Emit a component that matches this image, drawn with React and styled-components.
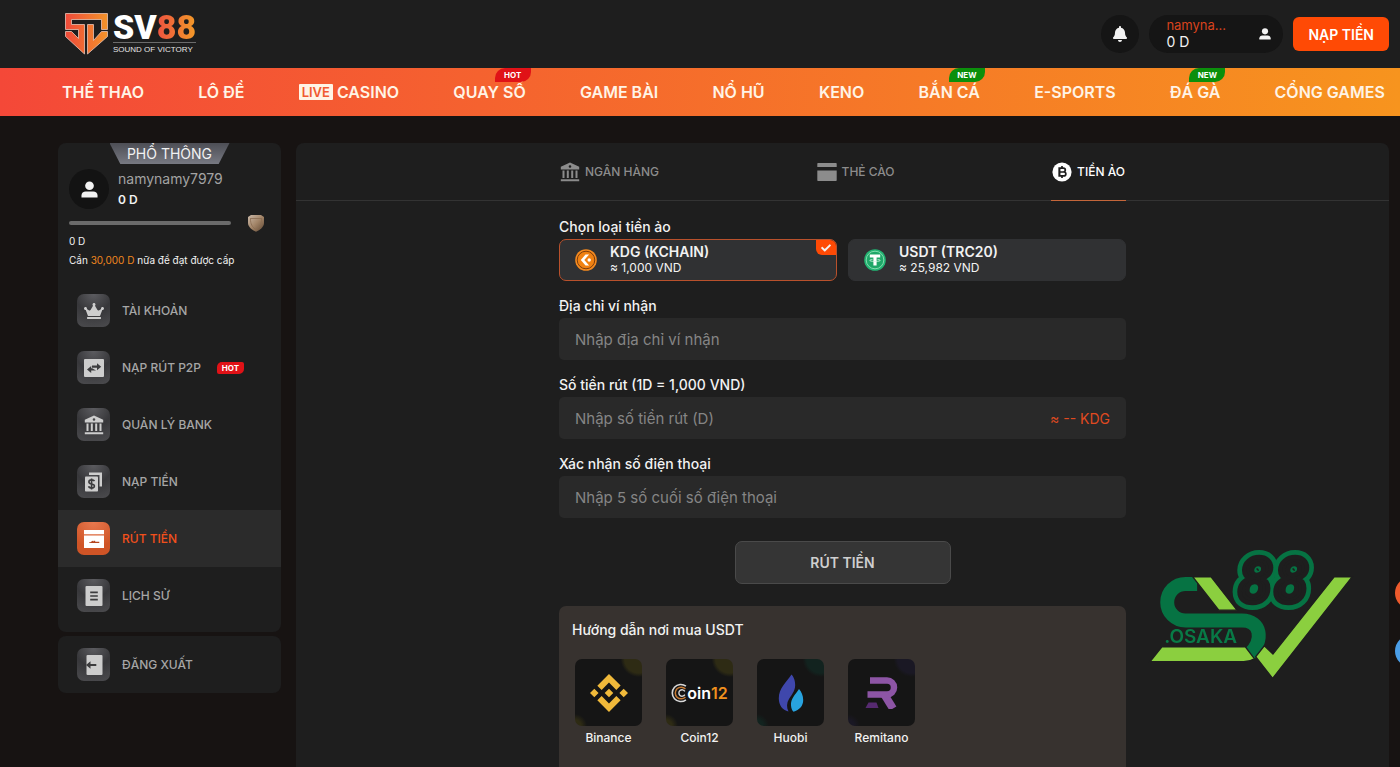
import React, { useState } from "react";
import styled, { createGlobalStyle, css } from "styled-components";
import { FaBell, FaCheck, FaCrown } from "react-icons/fa";
import { SiBinance } from "react-icons/si";

const navItems = [
  { label: "THỂ THAO" },
  { label: "LÔ ĐỀ" },
  { label: "CASINO", live: true },
  { label: "QUAY SỐ", badge: "HOT" },
  { label: "GAME BÀI" },
  { label: "NỔ HŨ" },
  { label: "KENO" },
  { label: "BẮN CÁ", badge: "NEW" },
  { label: "E-SPORTS" },
  { label: "ĐÁ GÀ", badge: "NEW" },
  { label: "CỔNG GAMES" },
];

const UserIcon = ({ size }) => (
  <svg width={size} height={size} viewBox="0 0 18 18" fill="currentColor" aria-hidden="true">
    <circle cx="9" cy="5" r="4.6" />
    <path d="M.5 17.4v-2c0-2.600 2-4.200 4.500-4.200h8c2.500 0 4.500 1.600 4.500 4.200v2z" />
  </svg>
);

const BankIcon = ({ size }) => (
  <svg width={size} height={size} viewBox="0 0 20 20" fill="currentColor" aria-hidden="true">
    <path
      fillRule="evenodd"
      d="M10 .5 19.200 4.800V7.600H.8V4.800zM10 3.200a1.300 1.300 0 1 0 0 2.600 1.300 1.300 0 0 0 0-2.600z"
    />
    <path d="M2.500 8.600h2v7.400h-2zM6.800 8.600h2v7.400h-2zM11.200 8.600h2v7.400h-2zM15.500 8.600h2v7.400h-2zM.8 17.200h18.400v2H.8z" />
  </svg>
);

const CardIcon = ({ size }) => (
  <svg width={size} height={size} viewBox="0 0 20 20" fill="currentColor" aria-hidden="true">
    <path d="M1 1h18a.7.7 0 0 1 .7.7V5H.3V1.700A.7.7 0 0 1 1 1zM.3 8.500h19.400v9.800a.7.7 0 0 1-.7.7H1a.7.7 0 0 1-.7-.7z" />
  </svg>
);

const BitcoinIcon = ({ size }) => (
  <svg width={size} height={size} viewBox="0 0 20 20" aria-hidden="true">
    <circle cx="10" cy="10" r="9.600" fill="#fff" />
    <path
      d="M7.200 6.200h4.200a1.800 1.800 0 0 1 0 3.800H7.600h4.300a1.900 1.900 0 0 1 0 3.900H7.200zM7.600 6v8M10 4v2.200M10 13.900V16"
      fill="none"
      stroke="#1e1e1e"
      strokeWidth="1.700"
    />
  </svg>
);

const TransferIcon = () => (
  <svg width="20" height="20" viewBox="0 0 20 20" aria-hidden="true">
    <rect width="20" height="18" y="1" rx="1" fill="currentColor" />
    <path
      d="M8 7.600h5V5.200l4.200 3.500L13 12.200V9.800H8zM12 12.500H7.200V14.900L3 11.400 7.200 7.900v2.400h1z"
      fill="#3c3c3e"
    />
  </svg>
);

const DepositIcon = () => (
  <svg width="20" height="20" viewBox="0 0 20 20" aria-hidden="true">
    <path d="M5 .5h13v14h-2.500V3H5z" fill="currentColor" />
    <rect x="1" y="4.500" width="13" height="15" rx=".8" fill="currentColor" />
    <path
      d="M10.500 9.200C10 8.200 9 7.900 7.600 7.900c-1.700 0-2.700.8-2.700 2 0 2.900 5.500 1.300 5.500 4 0 1.200-1.100 2-2.800 2-1.500 0-2.700-.5-3-1.700M7.600 6.400v11.200"
      fill="none"
      stroke="#3c3c3e"
      strokeWidth="1.600"
    />
  </svg>
);

const WithdrawIcon = () => (
  <svg width="20" height="20" viewBox="0 0 20 20" aria-hidden="true">
    <path d="M0 1h20v4.200H0zM0 6.600h20V19H0z" fill="#fff" />
    <path d="M5 13.600c2-.6 3-1.600 4.200-2.200v1.200l1.800-1 .3 1.200h4v1.200H5z" fill="#b5451f" />
  </svg>
);

const HistoryIcon = () => (
  <svg width="20" height="20" viewBox="0 0 20 20" aria-hidden="true">
    <rect x="1.500" width="17" height="20" rx="1" fill="currentColor" />
    <path d="M6.200 6.300h7.600M6.200 10h7.600M6.200 13.700h7.600" stroke="#3c3c3e" strokeWidth="1.700" />
  </svg>
);

const LogoutIcon = () => (
  <svg width="20" height="20" viewBox="0 0 20 20" aria-hidden="true">
    <rect x="2.500" width="16" height="20" rx="1" fill="currentColor" />
    <path d="M2 10 6.500 6.300v2.600h5.800v2.200H6.500v2.600z" fill="#3c3c3e" />
  </svg>
);

const ShieldMedal = () => (
  <svg width="18" height="18" viewBox="0 0 18 18" aria-hidden="true">
    <defs>
      <linearGradient id="medal" x1="0" y1="0" x2="1" y2="1">
        <stop offset="0" stopColor="#c9b8a8" />
        <stop offset="0.5" stopColor="#a38568" />
        <stop offset="1" stopColor="#5d4531" />
      </linearGradient>
    </defs>
    <path d="M1 3 4 1h10l3 2v6c0 4-4 7-8 8.800C5 16 1 13 1 9z" fill="url(#medal)" />
    <path
      d="M3 4.500h12M3.500 5C3.500 10 5 13 9 15.600c4-2.600 5.500-5.600 5.500-10.600"
      fill="none"
      stroke="#8a6c52"
      strokeWidth=".8"
    />
  </svg>
);

const LogoMark = () => (
  <svg width="43" height="42" viewBox="-0.500 -0.500 43 42" aria-hidden="true">
    <defs>
      <linearGradient id="mark" x1="0" y1="0" x2="42" y2="0" gradientUnits="userSpaceOnUse">
        <stop offset="0" stopColor="#ef4a3a" />
        <stop offset="1" stopColor="#f3932a" />
      </linearGradient>
    </defs>
    <g fill="url(#mark)" stroke="#e8c3b4" strokeWidth=".8">
      <path d="M0 0H42V16H36V6H6V11H19V40.500L0 23V18H6L13 25V16H0z" />
      <path d="M22 11H28V27L36 18H42V23L22 40.500z" />
    </g>
  </svg>
);

const KdgCoin = () => (
  <svg width="22" height="22" viewBox="0 0 22 22" aria-hidden="true">
    <circle cx="11" cy="11" r="10.800" fill="#f58a1f" />
    <circle cx="11" cy="11" r="8.800" fill="#f08112" stroke="#7c3d0c" strokeWidth="1" />
    <path d="M10.500 5.500h3.600L9.300 11l4.800 5.500h-3.600L5.800 11z" fill="#fff" />
    <circle cx="14.200" cy="11" r="1.700" fill="#fff" />
  </svg>
);

const UsdtCoin = () => (
  <svg width="22" height="22" viewBox="0 0 22 22" aria-hidden="true">
    <circle cx="11" cy="11" r="10.800" fill="#22b573" />
    <circle cx="11" cy="11" r="8.800" fill="#1fa768" stroke="#8be0b4" strokeWidth=".9" />
    <path d="M5.800 5.600h10.400v2.800h-3.600v8H9.400v-8H5.800z" fill="#fff" />
    <path d="M8.500 10.400c-4 .5-4 2 2.500 2s6.500-1.500 2.500-2" fill="none" stroke="#d5f5e4" strokeWidth=".8" />
  </svg>
);

const Coin12Mark = () => (
  <CoinWord>
    <svg width="16" height="20" viewBox="0 0 15 18" fill="none" aria-hidden="true">
      <path d="M14 2.600A8 8 0 1 0 14 15.400" stroke="#d9d9d9" strokeWidth="1.500" />
      <path d="M13.500 5.200A5.500 5.500 0 1 0 13.500 12.800" stroke="#c77a33" strokeWidth="1.400" />
      <path d="M13 7.500A3 3 0 1 0 13 10.500" stroke="#d9d9d9" strokeWidth="1.300" />
    </svg>
    oin<b>12</b>
  </CoinWord>
);

const HuobiMark = () => (
  <svg width="26" height="38" viewBox="0 0 26 38" aria-hidden="true">
    <path
      d="M13.500.5C8 9 .8 14 .8 24.500c0 6.500 3.500 11.500 9.700 13-2-4-2-8.500.5-12.500 3.500-5.500 7-9 6-16.500-.4-3.400-1.700-6-3.500-8z"
      fill="#3f47ac"
    />
    <path
      d="M21 15c-3.500 5.500-8.500 9.500-8 16.500.2 3 1.200 5 2.500 6.200 6-1.700 9.700-5.700 9.700-11.700 0-4.500-1.700-8-4.200-11z"
      fill="#28a3df"
    />
  </svg>
);

const RemitanoMark = () => (
  <svg width="34" height="32" viewBox="0 0 34 32" aria-hidden="true">
    <path d="M5 3.500H22a7 7 0 0 1 0 14H2.500" fill="none" stroke="#8d55a5" strokeWidth="6.500" />
    <path d="M19 17 28 31.500" stroke="#8d55a5" strokeWidth="8" />
    <path d="M3.500 25.500h8l2 5.500H.5z" fill="#562a70" />
  </svg>
);

const menuItems = [
  { label: "TÀI KHOẢN", icon: <FaCrown size={20} /> },
  { label: "NẠP RÚT P2P", icon: <TransferIcon />, badge: "HOT" },
  { label: "QUẢN LÝ BANK", icon: <BankIcon size={20} /> },
  { label: "NẠP TIỀN", icon: <DepositIcon /> },
  { label: "RÚT TIỀN", icon: <WithdrawIcon />, active: true },
  { label: "LỊCH SỬ", icon: <HistoryIcon /> },
];

const tabs = [
  { id: "bank", label: "NGÂN HÀNG", icon: <BankIcon size={20} /> },
  { id: "card", label: "THẺ CÀO", icon: <CardIcon size={20} /> },
  { id: "crypto", label: "TIỀN ẢO", icon: <BitcoinIcon size={20} /> },
];

const coins = [
  { id: "kdg", name: "KDG (KCHAIN)", rate: "≈ 1,000 VND", icon: <KdgCoin /> },
  { id: "usdt", name: "USDT (TRC20)", rate: "≈ 25,982 VND", icon: <UsdtCoin /> },
];

const exchanges = [
  { name: "Binance", glow: "#2e2b14", icon: <SiBinance size={38} color="#f0b93a" /> },
  { name: "Coin12", glow: "#2e2b14", icon: <Coin12Mark /> },
  { name: "Huobi", glow: "#12231f", icon: <HuobiMark /> },
  { name: "Remitano", glow: "#1a1824", icon: <RemitanoMark /> },
];

function App() {
  const [tab, setTab] = useState("crypto");
  const [coin, setCoin] = useState("kdg");
  const [wallet, setWallet] = useState("");
  const [amount, setAmount] = useState("");
  const [phone, setPhone] = useState("");

  return (
    <>
      <GlobalStyle />
      <Header>
        <Logo href="#">
          <LogoMark />
          <LogoText>
            <strong>
              SV<span>88</span>
            </strong>
            <small>SOUND OF VICTORY</small>
          </LogoText>
        </Logo>
        <HeaderActions>
          <RoundButton aria-label="Thông báo">
            <FaBell size={16} />
          </RoundButton>
          <UserPill href="#">
            <div>
              <PillName>namyna...</PillName>
              <p>0 D</p>
            </div>
            <UserIcon size={12} />
          </UserPill>
          <DepositButton>NẠP TIỀN</DepositButton>
        </HeaderActions>
      </Header>
      <Nav>
        {navItems.map((item) => (
          <NavLink href="#" key={item.label}>
            {item.live && <Live>LIVE</Live>}
            {item.label}
            {item.badge && <NavBadge $kind={item.badge}>{item.badge}</NavBadge>}
          </NavLink>
        ))}
      </Nav>
      <Page>
        <Sidebar>
          <SidePanel>
            <Rank>PHỔ THÔNG</Rank>
            <Profile>
              <Avatar>
                <UserIcon size={17} />
              </Avatar>
              <div>
                <UserName>namynamy7979</UserName>
                <Balance>0 D</Balance>
              </div>
            </Profile>
            <Level>
              <LevelBar />
              <ShieldMedal />
            </Level>
            <LevelText>
              <p>0 D</p>
              <p>
                Cần <em>30,000 D</em> nữa để đạt được cấp
              </p>
            </LevelText>
            <Menu>
              {menuItems.map((item) => (
                <MenuLink href="#" key={item.label} $active={item.active}>
                  <MenuIcon $active={item.active}>{item.icon}</MenuIcon>
                  {item.label}
                  {item.badge && <MenuBadge>{item.badge}</MenuBadge>}
                </MenuLink>
              ))}
            </Menu>
          </SidePanel>
          <SidePanel>
            <MenuLink href="#">
              <MenuIcon>
                <LogoutIcon />
              </MenuIcon>
              ĐĂNG XUẤT
            </MenuLink>
          </SidePanel>
        </Sidebar>

        <Main>
          <TabBar>
            <Tabs role="tablist">
              {tabs.map((t) => (
                <Tab
                  key={t.id}
                  role="tab"
                  aria-selected={tab === t.id}
                  $active={tab === t.id}
                  onClick={() => setTab(t.id)}
                >
                  {t.icon}
                  {t.label}
                </Tab>
              ))}
            </Tabs>
          </TabBar>
          <Form onSubmit={(e) => e.preventDefault()}>
            <CoinGroup>
              <legend>Chọn loại tiền ảo</legend>
              <CoinGrid>
                {coins.map((c) => (
                  <CoinOption key={c.id} $active={coin === c.id}>
                    <input
                      type="radio"
                      name="coin"
                      value={c.id}
                      checked={coin === c.id}
                      onChange={() => setCoin(c.id)}
                    />
                    {c.icon}
                    <div>
                      <strong>{c.name}</strong>
                      <p>{c.rate}</p>
                    </div>
                    {coin === c.id && (
                      <Tick>
                        <FaCheck size={10} />
                      </Tick>
                    )}
                  </CoinOption>
                ))}
              </CoinGrid>
            </CoinGroup>
            <Field>
              <label htmlFor="wallet">Địa chỉ ví nhận</label>
              <InputBox>
                <input
                  id="wallet"
                  type="text"
                  placeholder="Nhập địa chỉ ví nhận"
                  value={wallet}
                  onChange={(e) => setWallet(e.target.value)}
                />
              </InputBox>
            </Field>
            <Field>
              <label htmlFor="amount">Số tiền rút (1D = 1,000 VND)</label>
              <InputBox>
                <input
                  id="amount"
                  type="text"
                  placeholder="Nhập số tiền rút (D)"
                  value={amount}
                  onChange={(e) => setAmount(e.target.value)}
                />
                <span>≈ -- KDG</span>
              </InputBox>
            </Field>
            <Field>
              <label htmlFor="phone">Xác nhận số điện thoại</label>
              <InputBox>
                <input
                  id="phone"
                  type="text"
                  placeholder="Nhập 5 số cuối số điện thoại"
                  value={phone}
                  onChange={(e) => setPhone(e.target.value)}
                />
              </InputBox>
            </Field>
            <SubmitButton type="submit">RÚT TIỀN</SubmitButton>
            <Guide>
              <h2>Hướng dẫn nơi mua USDT</h2>
              <Exchanges>
                {exchanges.map((ex) => (
                  <Exchange href="#" key={ex.name}>
                    <ExchangeTile $glow={ex.glow}>{ex.icon}</ExchangeTile>
                    {ex.name}
                  </Exchange>
                ))}
              </Exchanges>
            </Guide>
          </Form>
        </Main>
      </Page>

      <Watermark viewBox="50 50 630 400" aria-hidden="true">
        <path
          d="M200 161H165A55 55 0 0 0 165 271H335C392 271 402 330 358 372"
          fill="none"
          stroke="#067343"
          strokeWidth="42"
        />
        <path
          d="M187 140H242L320 240H265zM612 140H666L427 445L376 380L402 347L428 372zM94 350H345L372 386Q358 395 340 395H58z"
          fill="#8bcf3f"
          stroke="#1e1e1e"
          strokeWidth="4"
        />
        <g fontFamily="DejaVu Sans Mono, monospace" fontWeight="700" fontStyle="italic" fontSize="180">
          <text x="322" y="214" fill="#067343" stroke="#067343" strokeWidth="42" strokeLinejoin="round">
            88
          </text>
          <text x="322" y="214" fill="#1e1e1e" stroke="#1e1e1e" strokeWidth="14">
            88
          </text>
        </g>
        <text x="101" y="340" fontFamily="Inter, sans-serif" fontWeight="600" fontSize="57" fill="#087a46">
          .OSAKA
        </text>
      </Watermark>
      <Floats>
        <FloatButton aria-label="Hotline" $color="#ee5a2c" />
        <FloatButton aria-label="Chat" $color="#4a9ee8" />
      </Floats>
    </>
  );
}

const GlobalStyle = createGlobalStyle`
  * {
    box-sizing: border-box;
    margin: 0;
    padding: 0;
  }
  html {
    scrollbar-width: none;
  }
  body {
    background: #171312;
    color: #f2f2f2;
    font-family: Inter, "Open Sans", sans-serif;
    font-size: 14px;
    overflow-x: hidden;
  }
  a {
    color: inherit;
    text-decoration: none;
  }
  button, input {
    font: inherit;
    color: inherit;
    border: none;
  }
  button {
    cursor: pointer;
  }
`;

const Header = styled.header`
  display: flex;
  align-items: center;
  justify-content: space-between;
  height: 68px;
  padding: 0 11px 0 65px;
  background: #1e1e1e;
`;

const Logo = styled.a`
  display: flex;
  align-items: center;
  gap: 5px;
`;

const LogoText = styled.div`
  display: flex;
  flex-direction: column;
  strong {
    padding-bottom: 1px;
    border-bottom: 1px solid #6b6b6b;
    font: 900 34px/28px Roboto, sans-serif;
    color: #fff;
  }
  span {
    background: linear-gradient(90deg, #ee5340, #f39a28);
    background-clip: text;
    color: transparent;
  }
  small {
    padding-top: 1px;
    font: 400 8px/12px "Liberation Sans", sans-serif;
    color: #e4e4e4;
  }
`;

const HeaderActions = styled.div`
  display: flex;
  align-items: center;
  gap: 10px;
`;

const RoundButton = styled.button`
  display: flex;
  align-items: center;
  justify-content: center;
  width: 38px;
  height: 38px;
  border-radius: 50%;
  background: #151515;
`;

const UserPill = styled.a`
  display: flex;
  align-items: center;
  justify-content: space-between;
  width: 134px;
  height: 38px;
  padding: 0 12px 0 17px;
  border-radius: 19px;
  background: #151515;
  line-height: 18px;
`;

const PillName = styled.p`
  font-size: 13px;
  line-height: 16px;
  color: #d8431d;
`;

const DepositButton = styled.button`
  height: 34px;
  padding: 0 15px;
  border-radius: 6px;
  background: #ff4a05;
  color: #fff;
  font-weight: 600;
`;

const Nav = styled.nav`
  display: flex;
  align-items: center;
  justify-content: space-between;
  height: 48px;
  padding: 0 15px 0 62px;
  background: linear-gradient(90deg, #f44838, #f7941e);
`;

const NavLink = styled.a`
  position: relative;
  display: flex;
  align-items: center;
  gap: 4px;
  font-size: 16px;
  font-weight: 600;
  line-height: 48px;
  color: #fff4e6;
  white-space: nowrap;
`;

const Live = styled.span`
  padding: 0 3px;
  border-radius: 1px;
  background: #fff4e6;
  color: #f15a30;
  font-size: 13px;
  line-height: 16px;
`;

const badge = css`
  background: ${(props) => (props.$kind === "NEW" ? "#0b8f0b" : "#e01217")};
  color: #fff;
  font-size: 8px;
  font-weight: 700;
  text-align: center;
`;

const NavBadge = styled.span`
  ${badge}
  position: absolute;
  top: 0;
  right: -5px;
  width: 36px;
  border-radius: 10px 0;
  line-height: 14px;
`;

const Page = styled.div`
  display: flex;
  gap: 15px;
  padding: 27px 11px 0 58px;
`;

const Sidebar = styled.aside`
  display: flex;
  flex-direction: column;
  gap: 4px;
  flex: 0 0 223px;
`;

const SidePanel = styled.div`
  border-radius: 8px;
  background: #1e1e1e;
`;

const Rank = styled.div`
  width: 120px;
  margin: 0 auto;
  background: linear-gradient(#4d4e55, #777982);
  clip-path: polygon(0 0, 100% 0, 91% 100%, 9% 100%);
  line-height: 21px;
  text-align: center;
`;

const Profile = styled.div`
  display: flex;
  align-items: center;
  gap: 9px;
  padding: 4px 11px;
`;

const Avatar = styled.div`
  display: flex;
  align-items: center;
  justify-content: center;
  width: 40px;
  height: 40px;
  border-radius: 50%;
  background: #131313;
`;

const UserName = styled.p`
  font-size: 14px;
  line-height: 21px;
  color: #a3a3a3;
`;

const Balance = styled.p`
  font-size: 12px;
  font-weight: 600;
  line-height: 21px;
`;

const Level = styled.div`
  display: flex;
  align-items: center;
  gap: 16px;
  padding: 0 16px 0 11px;
`;

const LevelBar = styled.div`
  flex: 1;
  height: 4px;
  border-radius: 2px;
  background: #6b6b6b;
`;

const LevelText = styled.div`
  padding: 0 11px 12px;
  font-size: 10px;
  line-height: 19px;
  white-space: nowrap;
  em {
    font-style: normal;
    color: #f0871e;
  }
`;

const Menu = styled.nav`
  padding-bottom: 8px;
`;

const MenuLink = styled.a`
  display: flex;
  align-items: center;
  gap: 12px;
  height: 57px;
  padding: 0 19px;
  background: ${(props) => (props.$active ? "#2b2b2b" : "transparent")};
  color: ${(props) => (props.$active ? "#f2501c" : "#a6a6a6")};
  font-size: 12px;
  font-weight: 500;
`;

const MenuIcon = styled.span`
  display: flex;
  align-items: center;
  justify-content: center;
  width: 33px;
  height: 33px;
  border-radius: 7px;
  background: ${(props) =>
    props.$active
      ? "radial-gradient(circle at 50% 0, #e8794f, #cf5426 70%)"
      : "radial-gradient(circle at 50% 0, #5c5c60, #37373a 50%, #4c4c4f)"};
  color: #cdcdcd;
`;

const MenuBadge = styled.span`
  ${badge}
  width: 27px;
  margin-left: 4px;
  border-radius: 5px 2px;
  line-height: 12px;
`;

const Main = styled.main`
  flex: 1;
  border-radius: 8px 8px 0 0;
  background: #1e1e1e;
`;

const TabBar = styled.div`
  border-bottom: 1px solid #333;
`;

const Tabs = styled.div`
  display: flex;
  justify-content: space-between;
  max-width: 567px;
  margin: 0 auto -1px;
`;

const Tab = styled.button`
  display: flex;
  align-items: center;
  gap: 5px;
  height: 58px;
  padding: 0 1px;
  border-bottom: 1px solid ${(props) => (props.$active ? "#c4663a" : "transparent")};
  background: none;
  color: ${(props) => (props.$active ? "#fff" : "#8c8c8c")};
  font-size: 12px;
  font-weight: 500;
`;

const labelText = css`
  display: block;
  font-size: 14px;
  font-weight: 500;
  line-height: 25px;
`;

const Form = styled.form`
  display: flex;
  flex-direction: column;
  gap: 12px;
  max-width: 567px;
  margin: 0 auto;
  padding-top: 13px;
`;

const CoinGroup = styled.fieldset`
  border: none;
  legend {
    ${labelText}
  }
`;

const CoinGrid = styled.div`
  display: grid;
  grid-template-columns: 1fr 1fr;
  gap: 11px;
`;

const CoinOption = styled.label`
  position: relative;
  display: flex;
  align-items: center;
  gap: 13px;
  height: 42px;
  padding: 0 15px;
  border: 1px solid ${(props) => (props.$active ? "#b9512c" : "#303133")};
  border-radius: 7px;
  background: #303133;
  overflow: hidden;
  cursor: pointer;
  input {
    position: absolute;
    opacity: 0;
  }
  strong {
    display: block;
    font-size: 14px;
    font-weight: 600;
    line-height: 16px;
  }
  p {
    font-size: 12px;
    line-height: 16px;
  }
`;

const Tick = styled.span`
  position: absolute;
  top: 0;
  right: 0;
  display: flex;
  align-items: center;
  justify-content: center;
  width: 20px;
  height: 15px;
  border-radius: 0 0 0 6px;
  background: #ff4a05;
`;

const Field = styled.div`
  label {
    ${labelText}
  }
`;

const InputBox = styled.div`
  display: flex;
  align-items: center;
  height: 42px;
  padding: 0 16px;
  border-radius: 5px;
  background: #292929;
  input {
    flex: 1;
    min-width: 0;
    background: none;
    outline: none;
    font-size: 15px;
  }
  input::placeholder {
    color: #858585;
  }
  span {
    color: #e04a20;
  }
`;

const SubmitButton = styled.button`
  align-self: center;
  width: 216px;
  height: 43px;
  margin: 11px 0 10px;
  border: 1px solid #4a4a4a;
  border-radius: 7px;
  background: #353535;
  color: #cfcfcf;
  font-weight: 600;
`;

const Guide = styled.section`
  padding: 11px 13px 30px;
  border-radius: 7px 7px 0 0;
  background: #37322f;
  h2 {
    font-size: 14px;
    font-weight: 500;
    line-height: 25px;
  }
`;

const Exchanges = styled.div`
  display: flex;
  gap: 24px;
  padding: 17px 3px 0;
`;

const Exchange = styled.a`
  display: flex;
  flex-direction: column;
  align-items: center;
  width: 67px;
  font-size: 12px;
  font-weight: 500;
  line-height: 24px;
`;

const ExchangeTile = styled.span`
  display: flex;
  align-items: center;
  justify-content: center;
  width: 67px;
  height: 67px;
  border-radius: 7px;
  background: ${(props) => `radial-gradient(circle at 95% 0, ${props.$glow} 14px, transparent 18px),
    radial-gradient(circle at 0 100%, ${props.$glow} 6px, transparent 12px), #151515`};
`;

const CoinWord = styled.span`
  display: flex;
  align-items: center;
  font-size: 16px;
  font-weight: 600;
  color: #fff;
  b {
    font-weight: 600;
    color: #f0901e;
  }
`;

const Watermark = styled.svg`
  position: fixed;
  right: 43px;
  bottom: 87px;
  width: 210px;
  height: 133px;
  overflow: visible;
  pointer-events: none;
`;

const Floats = styled.div`
  position: fixed;
  right: -27px;
  bottom: 100px;
  display: flex;
  flex-direction: column;
  gap: 26px;
`;

const FloatButton = styled.button`
  width: 32px;
  height: 32px;
  border-radius: 50%;
  background: ${(props) => props.$color};
`;

export default App;
